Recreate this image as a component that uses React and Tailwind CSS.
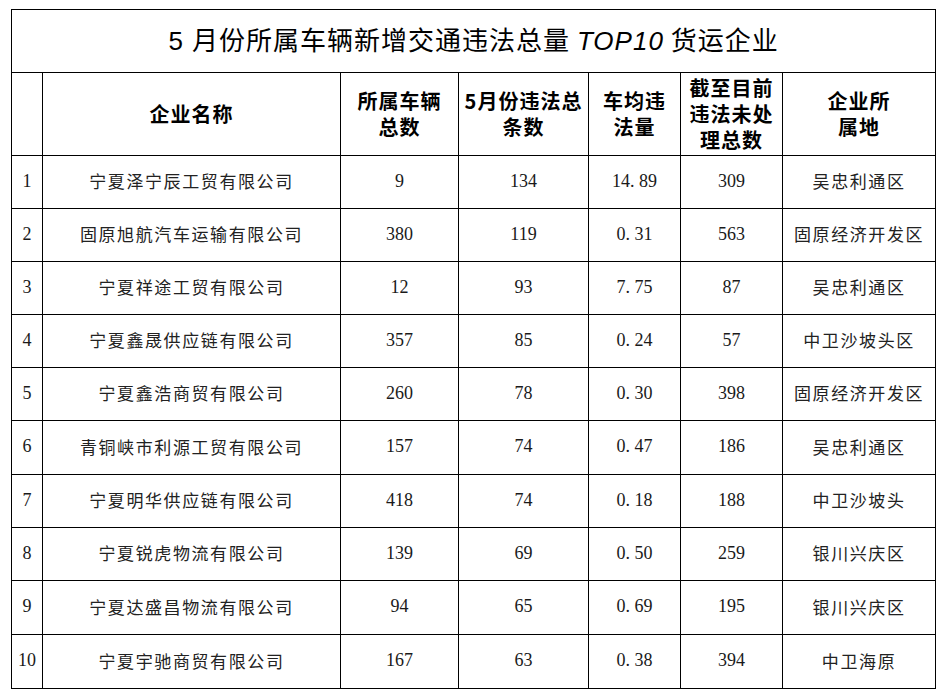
import React from "react";

const rows = [
  ["1", "宁夏泽宁辰工贸有限公司", "9", "134", "14.89", "309", "吴忠利通区"],
  ["2", "固原旭航汽车运输有限公司", "380", "119", "0.31", "563", "固原经济开发区"],
  ["3", "宁夏祥途工贸有限公司", "12", "93", "7.75", "87", "吴忠利通区"],
  ["4", "宁夏鑫晟供应链有限公司", "357", "85", "0.24", "57", "中卫沙坡头区"],
  ["5", "宁夏鑫浩商贸有限公司", "260", "78", "0.30", "398", "固原经济开发区"],
  ["6", "青铜峡市利源工贸有限公司", "157", "74", "0.47", "186", "吴忠利通区"],
  ["7", "宁夏明华供应链有限公司", "418", "74", "0.18", "188", "中卫沙坡头"],
  ["8", "宁夏锐虎物流有限公司", "139", "69", "0.50", "259", "银川兴庆区"],
  ["9", "宁夏达盛昌物流有限公司", "94", "65", "0.69", "195", "银川兴庆区"],
  ["10", "宁夏宇驰商贸有限公司", "167", "63", "0.38", "394", "中卫海原"],
];

const heights = [53, 53, 53, 53, 53, 54, 53, 53, 54, 54];

function Num({ v }) {
  const parts = v.split(".");
  if (parts.length === 1) return <span>{v}</span>;
  return (
    <span>
      {parts[0]}
      <span className="inline-block w-[9px] text-left">.</span>
      {parts[1]}
    </span>
  );
}

const cjk = "font-['Noto_Sans_CJK_SC',sans-serif]";
const serif = "font-['Liberation_Serif','Noto_Sans_CJK_SC',serif]";

export default function App() {
  return (
    <div className="w-[945px] h-[698px] bg-white pl-[11px] pt-[9px]">
      <table className="table-fixed border-collapse w-[924px] text-[#1a1a1a]">
        <colgroup>
          <col className="w-[31px]" />
          <col className="w-[298px]" />
          <col className="w-[118px]" />
          <col className="w-[130px]" />
          <col className="w-[92px]" />
          <col className="w-[102px]" />
          <col className="w-[153px]" />
        </colgroup>
        <tbody>
          <tr className="h-[63px]">
            <td
              colSpan={7}
              className={`border border-black text-center align-middle p-0 pb-[3px] text-[26px] tracking-[1px] ${cjk} text-black`}
            >
              <span className="font-['Liberation_Sans','Noto_Sans_CJK_SC',sans-serif]">5 </span>
              月份所属车辆新增交通违法总量{" "}
              <span className="italic font-['Liberation_Sans',sans-serif]">TOP10</span>{" "}
              货运企业
            </td>
          </tr>
          <tr className={`h-[83px] text-[20px] font-bold leading-[26px] tracking-[1px] text-black ${cjk}`}>
            <td className="border border-black p-0"></td>
            <td className="border border-black p-0 text-center align-middle">企业名称</td>
            <td className="border border-black p-0 text-center align-middle">
              所属车辆<br />总数
            </td>
            <td className="border border-black p-0 text-center align-middle whitespace-nowrap">
              5月份违法总<br />条数
            </td>
            <td className="border border-black p-0 text-center align-middle">
              车均违<br />法量
            </td>
            <td className="border border-black p-0 text-center align-middle">
              截至目前<br />违法未处<br />理总数
            </td>
            <td className="border border-black p-0 text-center align-middle">
              企业所<br />属地
            </td>
          </tr>
          {rows.map((r, i) => (
            <tr key={r[0]} style={{ height: heights[i] }}>
              <td className={`border border-black p-0 pb-[2px] text-center align-middle text-[18px] ${serif}`}>{r[0]}</td>
              <td className={`border border-black p-0 pb-[2px] text-center align-middle text-[17px] tracking-[1.6px] whitespace-nowrap text-[#222] ${cjk}`}>{r[1]}</td>
              <td className={`border border-black p-0 pb-[2px] text-center align-middle text-[18px] ${serif}`}>{r[2]}</td>
              <td className={`border border-black p-0 pb-[2px] text-center align-middle text-[18px] ${serif}`}>{r[3]}</td>
              <td className={`border border-black p-0 pb-[2px] text-center align-middle text-[18px] ${serif}`}>
                <Num v={r[4]} />
              </td>
              <td className={`border border-black p-0 pb-[2px] text-center align-middle text-[18px] ${serif}`}>{r[5]}</td>
              <td className={`border border-black p-0 pb-[2px] text-center align-middle text-[17px] tracking-[1.6px] whitespace-nowrap text-[#222] ${cjk}`}>{r[6]}</td>
            </tr>
          ))}
        </tbody>
      </table>
    </div>
  );
}
